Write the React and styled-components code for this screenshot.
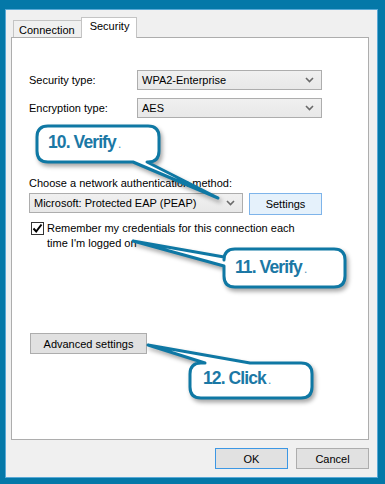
import React from "react";
import styled, { createGlobalStyle } from "styled-components";

const GlobalStyle = createGlobalStyle`
  html, body {
    margin: 0;
    padding: 0;
    background: #0478a8;
  }
  body {
    font-family: "Liberation Sans", Arial, sans-serif;
    font-size: 11px;
    color: #000;
  }
`;

// callouts lie over the dialog, so they are placed by page coordinates
const callouts = [
  {
    id: "c10",
    box: [37, 126, 122, 36],
    tail: { side: "bottom", a: 133, b: 147, tip: [218, 198] },
    text: "10. Verify",
    at: [48, 132],
  },
  {
    id: "c11",
    box: [224, 249, 121, 38],
    tail: { side: "left", a: 257, b: 266, tip: [133, 241] },
    text: "11. Verify",
    at: [235, 257],
  },
  {
    id: "c12",
    box: [190, 363, 122, 35],
    tail: { side: "top", a: 205, b: 250, tip: [148, 345] },
    text: "12. Click",
    at: [203, 368],
  },
];

const calloutPath = ({ box, tail }) => {
  const [x, y, w, h] = box;
  const r = 11;
  const [tx, ty] = tail.tip;
  let d = `M ${x + r} ${y} `;
  if (tail.side === "top") d += `L ${tail.a} ${y} L ${tx} ${ty} L ${tail.b} ${y} `;
  d += `L ${x + w - r} ${y} Q ${x + w} ${y} ${x + w} ${y + r} `;
  d += `L ${x + w} ${y + h - r} Q ${x + w} ${y + h} ${x + w - r} ${y + h} `;
  if (tail.side === "bottom") d += `L ${tail.b} ${y + h} L ${tx} ${ty} L ${tail.a} ${y + h} `;
  d += `L ${x + r} ${y + h} Q ${x} ${y + h} ${x} ${y + h - r} `;
  if (tail.side === "left") d += `L ${x} ${tail.b} L ${tx} ${ty} L ${x} ${tail.a} `;
  d += `L ${x} ${y + r} Q ${x} ${y} ${x + r} ${y} Z`;
  return d;
};

const Chevron = () => (
  <svg width="9" height="6" viewBox="0 0 9 6">
    <polyline points="1,1 4.5,4.5 8,1" fill="none" stroke="#6a6a6a" strokeWidth="1.6" />
  </svg>
);

const Check = () => (
  <svg width="11" height="11" viewBox="0 0 11 11">
    <polyline points="1.5,5.5 4.2,8.5 9.5,1.5" fill="none" stroke="#000" strokeWidth="2" />
  </svg>
);

const App = () => {
  return (
    <Screen>
      <GlobalStyle />
      <Window>
        <TabRow>
          <Tab>Connection</Tab>
          <Tab $active>Security</Tab>
        </TabRow>
        <Panel>
          <FieldRow>
            <FieldLabel>Security type:</FieldLabel>
            <Select $width={185}>
              <span>WPA2-Enterprise</span>
              <Chevron />
            </Select>
          </FieldRow>
          <FieldRow $gap={8}>
            <FieldLabel>Encryption type:</FieldLabel>
            <Select $width={185}>
              <span>AES</span>
              <Chevron />
            </Select>
          </FieldRow>
          <MethodLabel>Choose a network authentication method:</MethodLabel>
          <MethodRow>
            <Select $width={214}>
              <span>Microsoft: Protected EAP (PEAP)</span>
              <Chevron />
            </Select>
            <Button $width={73} $height={22} $variant="hover">Settings</Button>
          </MethodRow>
          <CheckRow>
            <CheckBox>
              <Check />
            </CheckBox>
            <CheckText>
              Remember my credentials for this connection each
              <br />
              time I'm logged on
            </CheckText>
          </CheckRow>
          <AdvancedWrap>
            <Button $width={117} $height={21}>Advanced settings</Button>
          </AdvancedWrap>
        </Panel>
        <Footer>
          <Button $width={73} $height={21} $variant="focus">OK</Button>
          <Button $width={73} $height={21}>Cancel</Button>
        </Footer>
      </Window>

      <Overlay viewBox="0 0 385 484" width="385" height="484">
        {callouts.map((c) => (
          <path
            key={c.id}
            d={calloutPath(c)}
            fill="#fff"
            stroke="#0f78a4"
            strokeWidth="3"
            strokeLinejoin="round"
          />
        ))}
      </Overlay>
      {callouts.map((c) => (
        <CalloutText key={c.id} $x={c.at[0]} $y={c.at[1]}>
          {c.text}
          <Dot>.</Dot>
        </CalloutText>
      ))}
    </Screen>
  );
};
export default App;

const Screen = styled.div`
  position: relative;
  width: 385px;
  height: 484px;
  box-sizing: border-box;
  padding: 9px 7px 6px 5px;
  display: flex;
  overflow: hidden;
  background: #0478a8;
`;
const Window = styled.div`
  flex: 1;
  display: flex;
  flex-direction: column;
  background: #f0f0f0;
  border: 1px solid #5aa9d6;
  padding: 7px 8px 8px 5px;
`;
const TabRow = styled.div`
  height: 20px;
  display: flex;
  align-items: flex-end;
  padding-left: 2px;
`;
const Tab = styled.div`
  position: relative;
  z-index: ${(p) => (p.$active ? 1 : 0)};
  box-sizing: border-box;
  height: ${(p) => (p.$active ? "21px" : "17px")};
  margin-bottom: ${(p) => (p.$active ? "-1px" : "0")};
  padding: ${(p) => (p.$active ? "1px 7px 0 8px" : "2px 6px 0 5px")};
  background: ${(p) => (p.$active ? "#fff" : "#f0f0f0")};
  border: 1px solid #c4c4c4;
  border-bottom: none;
  border-right: ${(p) => (p.$active ? "1px solid #c4c4c4" : "none")};
  line-height: 14px;
`;
const Panel = styled.div`
  flex: 1;
  display: flex;
  flex-direction: column;
  background: #fff;
  border: 1px solid #adadad;
  padding: 32px 0 0 17px;
`;
const FieldRow = styled.div`
  display: flex;
  align-items: center;
  margin-top: ${(p) => p.$gap || 0}px;
`;
const FieldLabel = styled.div`
  width: 108px;
`;
const Select = styled.div`
  box-sizing: border-box;
  width: ${(p) => p.$width}px;
  height: 20px;
  display: flex;
  align-items: center;
  justify-content: space-between;
  padding: 0 7px 0 4px;
  background: linear-gradient(#f0f0f0, #e8e8e8);
  border: 1px solid #adadad;
`;
const MethodLabel = styled.div`
  margin-top: 58px;
  line-height: 14px;
`;
const MethodRow = styled.div`
  display: flex;
  align-items: flex-start;
  gap: 6px;
  margin-top: 3px;
`;
const Button = styled.div`
  box-sizing: border-box;
  width: ${(p) => p.$width}px;
  height: ${(p) => p.$height}px;
  display: flex;
  align-items: center;
  justify-content: center;
  background: ${(p) => (p.$variant === "hover" ? "#e5f1fb" : "#e1e1e1")};
  border: 1px solid
    ${(p) => (p.$variant === "hover" ? "#7eb4ea" : p.$variant === "focus" ? "#3c97e4" : "#adadad")};
`;
const CheckRow = styled.div`
  display: flex;
  align-items: flex-start;
  margin-top: 6px;
  margin-left: 2px;
`;
const CheckBox = styled.div`
  box-sizing: border-box;
  width: 13px;
  height: 13px;
  margin-top: 1px;
  margin-right: 3px;
  display: flex;
  align-items: center;
  justify-content: center;
  background: #fff;
  border: 1px solid #333;
`;
const CheckText = styled.div`
  line-height: 15px;
`;
const AdvancedWrap = styled.div`
  margin-top: 82px;
  margin-left: 1px;
`;
const Footer = styled.div`
  display: flex;
  justify-content: flex-end;
  gap: 8px;
  margin-top: 8px;
`;
const Overlay = styled.svg`
  position: absolute;
  left: 0;
  top: 0;
  pointer-events: none;
  filter: drop-shadow(2px 3px 2px rgba(0, 0, 0, 0.35));
`;
const CalloutText = styled.div`
  position: absolute;
  left: ${(p) => p.$x}px;
  top: ${(p) => p.$y}px;
  font-family: "Liberation Sans", Arial, sans-serif;
  font-weight: bold;
  font-size: 17.5px;
  line-height: 20px;
  letter-spacing: -0.9px;
  color: #1b78a5;
  white-space: nowrap;
`;
const Dot = styled.span`
  font-weight: normal;
  font-size: 12px;
  letter-spacing: 0;
  margin-left: 2px;
  color: #5b8fb3;
`;
